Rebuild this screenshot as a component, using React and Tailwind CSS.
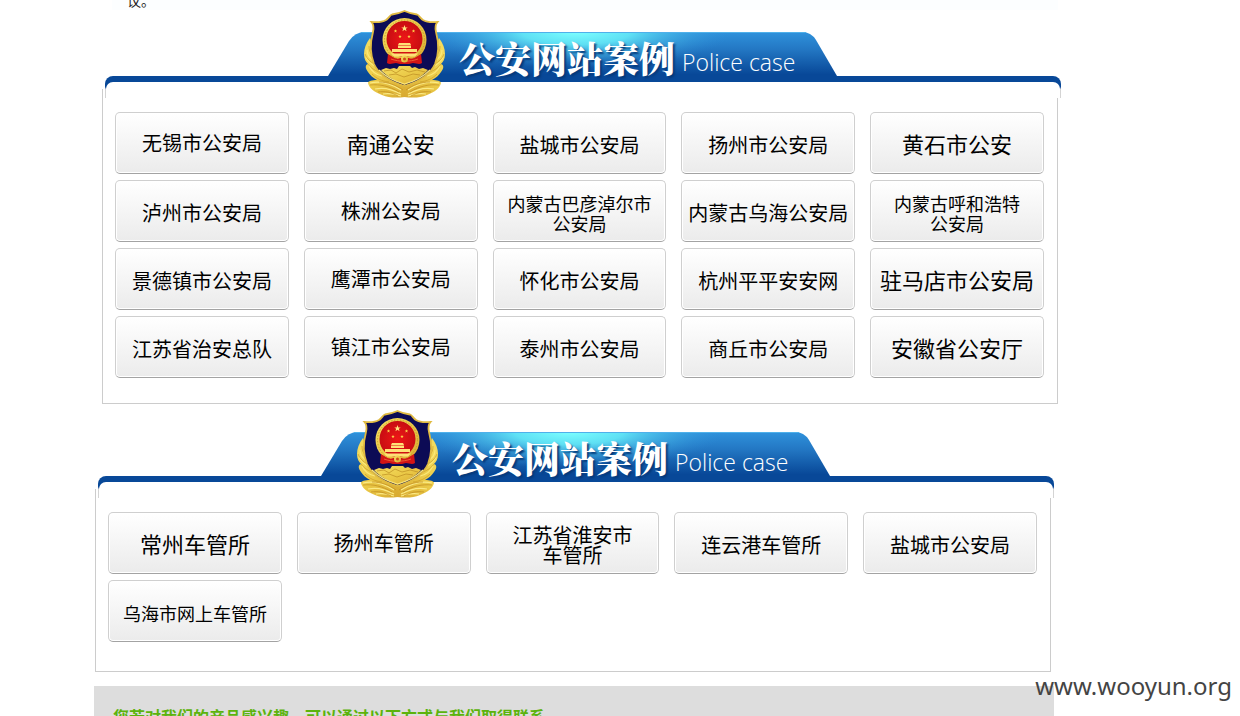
const provinceCases = [
  { label: "无锡市公安局", size: "text-[20px]", raised: true },
  { label: "南通公安", size: "text-[22px]", raised: true },
  { label: "盐城市公安局", size: "text-[20px]" },
  { label: "扬州市公安局", size: "text-[20px]" },
  { label: "黄石市公安", size: "text-[22px]", raised: true },
  { label: "泸州市公安局", size: "text-[20px]" },
  { label: "株洲公安局", size: "text-[20px]", raised: true },
  { label: "内蒙古巴彦淖尔市\n公安局", size: "text-[18px]" },
  { label: "内蒙古乌海公安局", size: "text-[20px]" },
  { label: "内蒙古呼和浩特\n公安局", size: "text-[18px]" },
  { label: "景德镇市公安局", size: "text-[20px]" },
  { label: "鹰潭市公安局", size: "text-[20px]", raised: true },
  { label: "怀化市公安局", size: "text-[20px]" },
  { label: "杭州平平安安网", size: "text-[20px]" },
  { label: "驻马店市公安局", size: "text-[22px]", raised: true },
  { label: "江苏省治安总队", size: "text-[20px]" },
  { label: "镇江市公安局", size: "text-[20px]", raised: true },
  { label: "泰州市公安局", size: "text-[20px]" },
  { label: "商丘市公安局", size: "text-[20px]" },
  { label: "安徽省公安厅", size: "text-[22px]", raised: true },
];

const vehicleCases = [
  { label: "常州车管所", size: "text-[22px]", raised: true },
  { label: "扬州车管所", size: "text-[20px]", raised: true },
  { label: "江苏省淮安市\n车管所", size: "text-[20px]" },
  { label: "连云港车管所", size: "text-[20px]" },
  { label: "盐城市公安局", size: "text-[20px]" },
  { label: "乌海市网上车管所", size: "text-[18px]" },
];

function PoliceEmblem({ id }) {
  const gold = `url(#${id}-gold)`;
  const star = "0,-4 1,-1.3 3.8,-1.3 1.6,0.4 2.4,3.2 0,1.6 -2.4,3.2 -1.6,0.4 -3.8,-1.3 -1,-1.3";
  const wing = (
    <g>
      <path d="M7 28C3 33 1 39 1 44c0 5 2 8 4 10-3 1-3 4 0 8 2 3 5 6 9 8-5 0-9 1-9 3 1 5 6 9 14 12 7 3 14 3 23 2V74L20 62Z" fill={gold} />
      <path d="M4 40c0 5 3 9 8 11M3 47c2 5 6 8 11 10M6 56c3 6 7 9 13 10M8 33c0 5 1 8 3 11" fill="none" stroke="#fbe878" strokeWidth="1.2" />
      <path d="M2 44c2 5 5 8 10 10M5 54c3 4 6 6 11 8M9 64c5 5 10 7 17 8M6 36c0 4 1 7 4 10" fill="none" stroke="#c59624" strokeWidth=".6" />
      <path d="M7 73c9-2 20 0 31 7M12 79c9-2 17 0 26 5M20 84c6-1 12 0 18 2" fill="none" stroke="#fbea85" strokeWidth="1.2" />
      <path d="M7 75c10-1 19 1 29 7M15 82c7-1 13 0 20 4M16 72c9 0 17 3 24 8" fill="none" stroke="#c08c20" strokeWidth=".7" />
    </g>
  );
  return (
    <svg viewBox="0 0 83 88" className="h-[88px] w-[83px]" aria-hidden="true">
      <defs>
        <linearGradient id={`${id}-gold`} x1="0" y1="0" x2="1" y2="1">
          <stop offset="0" stopColor="#f6df62" />
          <stop offset=".5" stopColor="#ebca48" />
          <stop offset="1" stopColor="#d8a930" />
        </linearGradient>
        <radialGradient id={`${id}-red`}>
          <stop offset="0" stopColor="#ee1717" />
          <stop offset="1" stopColor="#c80d12" />
        </radialGradient>
      </defs>
      {wing}
      <g transform="translate(83 0) scale(-1 1)">{wing}</g>
      <path d="M41.500 1C37 3 33 4 29 4.500C27 5 26 8 23 10C19 12.500 14 12.500 8.500 12C11 15 11 18 10 22C7 33 7 44 11 54C16 65 28 72 41.500 76C55 72 67 65 72 54C76 44 76 33 73 22C72 18 72 15 74.500 12C69 12.500 64 12.500 60 10C57 8 56 5 54 4.500C50 4 46 3 41.500 1Z" fill="#0c0b55" stroke="#e0ba42" strokeWidth="1.800" />
      <path d="M18 60l5-2 4 1 4-1 3 1 2-3h11l2 2 3-1 4 2 4-1 5 2c-6 7-14 10-23.500 15C32 70 24 67 18 60Z" fill={gold} />
      <path d="M21 61l7-1 5 3 6-4 7 3 8-2 8 2M26 65l7-1 8 3 9-3 7 1" fill="none" stroke="#bb8c22" strokeWidth=".7" />
      <path d="M16 60c6 6 15 11 25.500 14C52 71 61 66 67 60" fill="none" stroke="#fae67c" strokeWidth="1.200" />
      <circle cx="41.500" cy="30" r="22" fill={gold} />
      <circle cx="41.500" cy="30" r="20" fill="none" stroke="#bf9226" strokeWidth=".8" strokeDasharray="1.500 1.500" />
      <circle cx="41.500" cy="29" r="18" fill={`url(#${id}-red)`} />
      <polygon points={star} transform="translate(41.500 18.500) scale(.85)" fill="#ffe97f" />
      <g fill="#ffd84c">
        <polygon points={star} transform="translate(32.500 21) scale(.45)" />
        <polygon points={star} transform="translate(50.500 21) scale(.45)" />
        <polygon points={star} transform="translate(37 26.500) scale(.45)" />
        <polygon points={star} transform="translate(46 26.500) scale(.45)" />
      </g>
      <path d="M36 33h11l1 2H35ZM35 35.500h13V38H35ZM29 39h25v3H29ZM28 43.500h27l-3 3H31Z" fill="#ffe177" />
      <path d="M25 44l5 3c3 2 6 2 7 1h9c1 1 4 1 7-1l5-3 1 9c-3 2-6 0-9 0l-4 1h-9l-4-1c-3 0-6 2-9 0Z" fill="#d31515" />
      <path d="M28 49c8 3 19 3 27 0" fill="none" stroke="#ee5b32" />
      <circle cx="41.500" cy="49" r="3.500" fill={gold} />
      <circle cx="41.500" cy="49" r="1.500" fill="#d24a1b" />
    </svg>
  );
}

function BannerShape({ id }) {
  return (
    <svg viewBox="0 0 510 50" className="h-[50px] w-[510px]" aria-hidden="true">
      <defs>
        <linearGradient id={`${id}-blue`} x1="0" y1="0" x2="0" y2="1">
          <stop offset="0" stopColor="#2f92dc" />
          <stop offset=".35" stopColor="#2377c3" />
          <stop offset=".85" stopColor="#084898" />
          <stop offset="1" stopColor="#084898" />
        </linearGradient>
        <radialGradient id={`${id}-glow`} gradientUnits="userSpaceOnUse" cx="0" cy="0" r="1" gradientTransform="translate(248 0) scale(155 36)">
          <stop offset="0" stopColor="#7cffff" />
          <stop offset=".35" stopColor="#68f0fa" stopOpacity=".85" />
          <stop offset="1" stopColor="#2f92dc" stopOpacity="0" />
        </radialGradient>
      </defs>
      <path d="M0 50V44L21 9Q27 0 37 0H474Q483 0 488 8L509 44V50Z" fill={`url(#${id}-blue)`} />
      <path d="M0 50V44L21 9Q27 0 37 0H474Q483 0 488 8L509 44V50Z" fill={`url(#${id}-glow)`} />
      <path d="M33 .5H478" stroke="#4fb0ea" />
    </svg>
  );
}

function CaseSection({ id, cases, className, bodyClassName }) {
  return (
    <section className={className}>
      <header className="relative -mr-[3px] ml-[3px] grid h-[88px]">
        <div className="col-start-1 row-start-1 grid h-[22px] self-end rounded-t-[8px] bg-linear-to-b from-[#084898] from-50% to-[#d4d4d4] to-60% px-px pt-[6px]">
          <div className="rounded-t-[7px] bg-white" />
        </div>
        <div className="col-start-1 row-start-1 ml-[223px] grid w-[510px]">
          <div className="col-start-1 row-start-1 mt-[22px]">
            <BannerShape id={id} />
          </div>
          <div className="col-start-1 row-start-1 flex pl-[35px] text-white">
            <PoliceEmblem id={id} />
            <h2 className="mt-[21px] ml-[13px] flex h-[54px] items-center gap-[7px] whitespace-nowrap">
              <span className="font-['Noto_Serif_CJK_SC','Noto_Sans_CJK_SC',serif] text-[36px] leading-[54px] font-black [text-shadow:2px_2px_2px_#06397a]">
                公安网站案例
              </span>
              <span className="pt-[8px] font-['Open_Sans',sans-serif] text-[23px] leading-[32px] font-light">
                Police case
              </span>
            </h2>
          </div>
        </div>
      </header>
      <div className={`-mt-[9px] border-x border-b border-[#ccc] pt-[23px] pr-[13px] pl-[12px] ${bodyClassName}`}>
        <ul className="grid grid-cols-5 gap-x-[15px] gap-y-[6px]">
          {cases.map((item) => (
            <li key={item.label}>
              <a
                href="#"
                className={`flex h-[62px] items-center justify-center rounded-[5px] border border-[#cfcfcf] border-b-[#a3a3a3] bg-linear-to-b from-white to-[#ebebeb] text-center leading-[20px] whitespace-pre text-black shadow-[inset_0_0_0_1px_#fff] ${item.size} ${item.raised ? "pt-0" : "pt-[4px]"}`}
              >
                {item.label}
              </a>
            </li>
          ))}
        </ul>
      </div>
    </section>
  );
}

export default function App() {
  return (
    <div className="relative min-h-screen overflow-hidden bg-white font-['Noto_Sans_CJK_SC',sans-serif]">
      <main className="ml-[94px] max-w-[964px]">
        <div className="ml-[18px] flex h-[10px] items-end overflow-hidden bg-[#fcfeff] pl-[15px]">
          <p className="text-[14px] leading-[20px] text-[#222]">议。</p>
        </div>
        <CaseSection id="bureau" cases={provinceCases} className="ml-[8px]" bodyClassName="pb-[25px]" />
        <CaseSection
          id="vehicle"
          cases={vehicleCases}
          className="mt-[6px] ml-px max-w-[956px]"
          bodyClassName="pb-[29px]"
        />
        <footer className="mt-[14px] h-[30px] max-w-[960px] overflow-hidden bg-[#ddd] pt-[18px] pl-[19px]">
          <p className="text-[16px] leading-[24px] font-bold text-[#5cb30c]">
            您若对我们的产品感兴趣，可以通过以下方式与我们取得联系
          </p>
        </footer>
      </main>
      <p className="absolute right-[8px] bottom-[13px] font-['Noto_Sans',sans-serif] text-[24px] leading-[34px] text-[#444]">
        www.wooyun.org
      </p>
    </div>
  );
}
